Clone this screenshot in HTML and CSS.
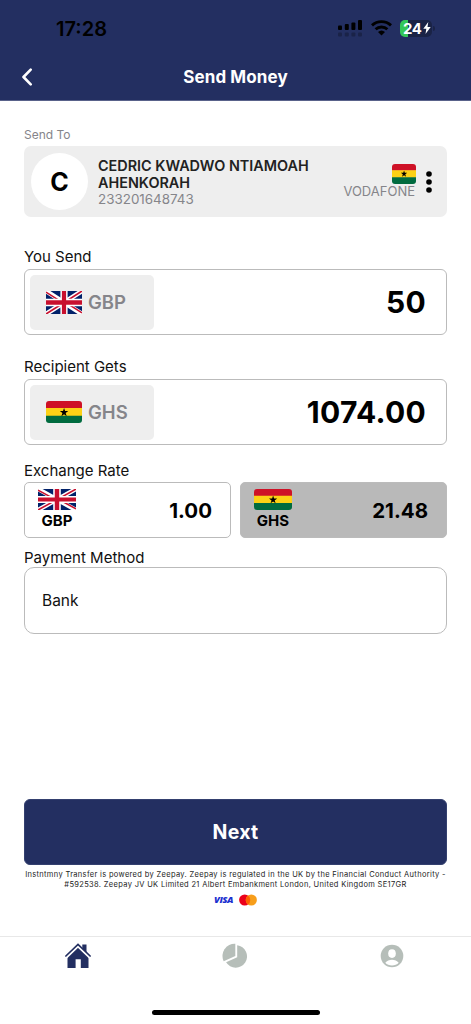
FILE: index.html
```html
<!DOCTYPE html>
<html lang="en">
<head>
<meta charset="utf-8">
<title>Send Money</title>
<link rel="stylesheet" href="styles.css">
</head>
<body>
<svg class="defs" width="0" height="0" aria-hidden="true">
  <symbol id="ghana" viewBox="0 0 36 22" preserveAspectRatio="none">
    <path fill="#ce1126" d="M0 0h36v7.3H0z"/>
    <path fill="#fcd116" d="M0 7h36v8H0z"/>
    <path fill="#006b3f" d="M0 14.7h36V22H0z"/>
  </symbol>
  <symbol id="star" viewBox="0 0 20 20">
    <path d="M10 0l2.4 7.3H20l-6.200 4.600 2.400 7.300L10 14.700l-6.200 4.500 2.400-7.300L0 7.300h7.600z"/>
  </symbol>
  <symbol id="uk" viewBox="0 0 60 36" preserveAspectRatio="none">
    <path fill="#012169" d="M0 0h60v36H0z"/>
    <path stroke="#fff" stroke-width="7.500" d="M0 0l60 36M60 0L0 36"/>
    <path stroke="#c8102e" stroke-width="2.600" d="M0 1.800l27 16M33 18l27 16.200M60 0L33 16.500M27 20L0 36"/>
    <path stroke="#fff" stroke-width="12" d="M30 0v36M0 18h60"/>
    <path stroke="#c8102e" stroke-width="7" d="M30 0v36M0 18h60"/>
  </symbol>
</svg>
<div class="screen">
  <header class="header">
    <div class="status">
      <span class="time">17:28</span>
      <div class="indicators">
        <svg class="signal" width="25" height="17" viewBox="0 0 25 17">
          <rect x="0" y="5.500" width="4" height="4.500" rx="1"/><rect x="6.800" y="4" width="4" height="6" rx="1"/>
          <rect x="13.400" y="2.500" width="4" height="7.500" rx="1"/><rect x="20" y="0" width="4" height="10" rx="1"/>
          <g opacity=".25"><rect x="0" y="12.500" width="4" height="4" rx="1"/><rect x="6.800" y="12.500" width="4" height="4" rx="1"/><rect x="13.400" y="12.500" width="4" height="4" rx="1"/><rect x="20" y="12.500" width="4" height="4" rx="1"/></g>
        </svg>
        <svg class="wifi" width="21" height="16" viewBox="0 0 21 16">
          <g fill="none" stroke="#000" stroke-width="2.900"><path d="M1 5.400a13.800 13.800 0 0 1 19 0"/><path d="M4.600 9.300a8.600 8.600 0 0 1 11.800 0"/></g>
          <path d="M7 12a5.200 5.200 0 0 1 7 0l-3.500 3.600z"/>
        </svg>
        <div class="battery">
          <span class="level">24</span>
          <svg width="8" height="12" viewBox="0 0 8 12"><path fill="#fff" d="M5.300 0L.3 6.700h3L2.500 12 7.700 4.900H4.500z"/></svg>
        </div>
        <span class="battery-tip"></span>
      </div>
    </div>
    <div class="nav">
      <svg class="back" width="12" height="18" viewBox="0 0 12 18"><path d="M9.700 1.600L2.500 9l7.200 7.400" fill="none" stroke="#fff" stroke-width="2.600" stroke-linecap="round" stroke-linejoin="round"/></svg>
      <h1 class="title">Send Money</h1>
    </div>
  </header>

  <main class="content">
    <p class="send-to">Send To</p>
    <section class="recipient">
      <div class="avatar">C</div>
      <div class="person">
        <p class="name">CEDRIC KWADWO NTIAMOAH AHENKORAH</p>
        <p class="phone">233201648743</p>
      </div>
      <div class="network">
        <svg class="flag-small" width="24" height="20"><use href="#ghana" width="24" height="20"/><use href="#star" x="8.800" y="6.500" width="6.500" height="6.500"/></svg>
        <span class="operator">VODAFONE</span>
      </div>
      <svg class="more" width="6" height="22" viewBox="0 0 6 22"><circle cx="3" cy="3" r="2.800"/><circle cx="3" cy="11" r="2.800"/><circle cx="3" cy="19" r="2.800"/></svg>
    </section>

    <label class="label label-send">You Send</label>
    <section class="amount">
      <div class="currency">
        <svg width="36" height="23"><use href="#uk" width="36" height="23"/></svg>
        <span class="code">GBP</span>
      </div>
      <span class="value">50</span>
    </section>

    <label class="label label-gets">Recipient Gets</label>
    <section class="amount">
      <div class="currency">
        <svg class="rounded" width="36" height="22"><use href="#ghana" width="36" height="22"/><use href="#star" x="13.800" y="7" width="8.500" height="8.500"/></svg>
        <span class="code">GHS</span>
      </div>
      <span class="value">1074.00</span>
    </section>

    <label class="label label-rate">Exchange Rate</label>
    <section class="rates">
      <div class="rate">
        <div class="unit">
          <svg width="38" height="21"><use href="#uk" width="38" height="21"/></svg>
          <span class="unit-code">GBP</span>
        </div>
        <span class="rate-value">1.00</span>
      </div>
      <div class="rate rate-target">
        <div class="unit">
          <svg class="rounded" width="38" height="21"><use href="#ghana" width="38" height="21"/><use href="#star" x="15" y="6.500" width="8.200" height="8.200"/></svg>
          <span class="unit-code">GHS</span>
        </div>
        <span class="rate-value">21.48</span>
      </div>
    </section>

    <label class="label label-method">Payment Method</label>
    <section class="method">Bank</section>

    <button class="next">Next</button>
    <p class="legal">Instntmny Transfer is powered by Zeepay. Zeepay is regulated in the UK by the Financial Conduct Authority -<br>#592538. Zeepay JV UK Limited 21 Albert Embankment London, United Kingdom SE17GR</p>
    <div class="cards">
      <span class="visa">VISA</span>
      <svg width="18" height="12" viewBox="0 0 18 12"><circle cx="5.700" cy="6" r="5.600" fill="#eb001b"/><circle cx="12.300" cy="6" r="5.600" fill="#f79e1b"/><path fill="#ff5f00" d="M9 1.500a5.600 5.600 0 0 1 0 9 5.600 5.600 0 0 1 0-9z"/></svg>
    </div>
  </main>

  <nav class="tabs">
    <div class="tab"><svg width="26" height="26" viewBox="0 0 26 26"><path fill="#232f61" d="M13 4.200l10.500 9.600V25h-7.700v-8.800h-5.200V25H2.500V13.800z"/><path d="M1 14L13 2.500 25 14" fill="none" stroke="#fff" stroke-width="3.400"/><path fill="#232f61" d="M17.300 1.500h4.200v8.300l-4.200-4z"/><path d="M.9 13L13 1.500 25.100 13" fill="none" stroke="#232f61" stroke-width="1.700" stroke-linecap="round"/></svg></div>
    <div class="tab"><svg width="26" height="26" viewBox="0 0 26 26" fill="#b6beb9"><path d="M13.300.7v12.200L1.700 18.200A12.200 12.200 0 0 1 13.300.7z"/><path d="M15.200 2.200A11.300 11.300 0 1 1 4.100 19.300l11.100-5.100z"/></svg></div>
    <div class="tab"><svg width="24" height="24" viewBox="0 0 24 24"><circle cx="12" cy="12" r="11.300" fill="#b6beb9"/><ellipse cx="12" cy="9.600" rx="3.800" ry="4.300" fill="#fff"/><path fill="#fff" d="M5.300 18.800c3-4.200 10.400-4.200 13.400 0-3 3.600-10.400 3.600-13.400 0z"/></svg></div>
  </nav>
  <div class="home-indicator"></div>
</div>
</body>
</html>
```
FILE: styles.css
```css
* { box-sizing: border-box; }
body { margin: 0; background: #fff; font-family: Inter, "Liberation Sans", sans-serif; color: #111; }
p, h1 { margin: 0; }
svg { display: block; flex: none; }
span, .label, .send-to, .legal { white-space: nowrap; }
.defs { position: absolute; }
.screen { width: 471px; height: 1024px; display: flex; flex-direction: column; overflow: hidden; }

.header { height: 101px; flex: none; background: #232f61; border-bottom: 1px solid #59628a; }
.status { height: 56px; padding: 0 36px 0 56px; display: flex; justify-content: space-between; align-items: center; color: #000; }
.time { font-size: 20px; font-weight: 600; line-height: 24px; padding-top: 2px; }
.indicators { display: flex; align-items: center; }
.wifi { margin: 0 8px 0 8px; }
.battery { width: 32px; height: 17px; border-radius: 5px; background: linear-gradient(90deg, #34c759 0 8px, #1a2346 8px); display: flex; align-items: center; padding-left: 3px; gap: 1px; }
.level { font-size: 15px; line-height: 17px; font-weight: 700; color: #fff; letter-spacing: -.4px; }
.battery-tip { width: 2px; height: 5px; margin-left: 1px; border-radius: 0 2px 2px 0; background: #1a2346; }
.nav { height: 42px; display: grid; grid-template-columns: 60px 1fr 60px; align-items: center; }
.back { margin-left: 21px; }
.title { font-size: 17px; line-height: 22px; font-weight: 700; color: #fff; text-align: center; letter-spacing: .1px; }

.content { flex: none; padding: 0 24px; height: 835px; display: flex; flex-direction: column; }
.send-to { margin-top: 25px; font-size: 12px; line-height: 17px; color: #85858a; }
.recipient { margin-top: 3px; height: 71px; border-radius: 7px; background: #eee; display: flex; align-items: center; padding: 0 15px 0 7px; }
.avatar { width: 57px; height: 57px; border-radius: 50%; background: #fff; display: flex; align-items: center; justify-content: center; font-size: 25px; font-weight: 700; color: #000; }
.person { flex: 1; margin-left: 10px; padding-top: 2px; }
.name { font-size: 14.400px; line-height: 17px; font-weight: 600; color: #222; width: 225px; }
.phone { font-size: 13.400px; line-height: 17px; color: #85858a; }
.network { display: flex; flex-direction: column; align-items: flex-end; }
.flag-small, .rounded { border-radius: 3px; }
.flag-small { margin-right: -1px; }
.operator { font-size: 13px; line-height: 15px; color: #85858a; }
.more { margin-left: 11px; }

.label { display: block; font-size: 15px; line-height: 20px; }
.label-send { margin-top: 30px; }
.label-gets { margin-top: 22px; }
.label-rate { margin-top: 16px; }
.label-method { margin-top: 10px; }
.amount { height: 66px; margin-top: 2px; border: 1px solid #bbb; border-radius: 6px; padding: 0 20px 0 4.500px; display: flex; align-items: center; justify-content: space-between; }
.currency { width: 124px; height: 55px; border-radius: 5px; background: #eee; padding-left: 16px; display: flex; align-items: center; gap: 6.500px; }
.code { font-size: 18.500px; font-weight: 600; color: #85858a; }
.value { font-size: 30px; font-weight: 700; color: #000; letter-spacing: .3px; }
.rates { height: 56px; margin-top: 1px; display: grid; grid-template-columns: 207px 207px; justify-content: space-between; }
.rate { border: 1px solid #bbb; border-radius: 5px; padding: 6px 18px 0 13px; display: flex; justify-content: space-between; }
.rate-target { background: #b9b9b9; }
.unit { display: flex; flex-direction: column; align-items: center; }
.unit-code { font-size: 15px; line-height: 22px; font-weight: 700; color: #000; }
.rate-value { font-size: 20.500px; line-height: 43px; font-weight: 700; color: #000; }
.method { height: 67px; margin-top: -1px; border: 1px solid #bbb; border-radius: 10px; padding-left: 17px; font-size: 15.500px; line-height: 66px; }
.next { flex: none; margin-top: 165px; height: 66px; border: 1px solid #34406f; border-radius: 6px; background: #232f61; color: #fff; font-family: inherit; font-size: 19.500px; font-weight: 700; letter-spacing: .3px; padding: 0; }
.legal { margin-top: 5px; font-size: 7.500px; line-height: 10px; color: #222; text-align: center; letter-spacing: .33px; }
.cards { margin-top: 4px; display: flex; justify-content: center; align-items: center; gap: 6px; height: 12px; }
.visa { font-family: "Open Sans", sans-serif; font-size: 9.500px; line-height: 12px; font-weight: 800; font-style: italic; color: #1a2fcf; letter-spacing: -.5px; }

.tabs { height: 68px; flex: none; border-top: 1px solid #e8e8e8; display: grid; grid-template-columns: repeat(3, 1fr); }
.tab { display: flex; justify-content: center; align-items: center; height: 38px; padding-right: 1px; }
.home-indicator { width: 168px; height: 5px; margin: 5.500px auto 0; border-radius: 3px; background: #000; }
```
